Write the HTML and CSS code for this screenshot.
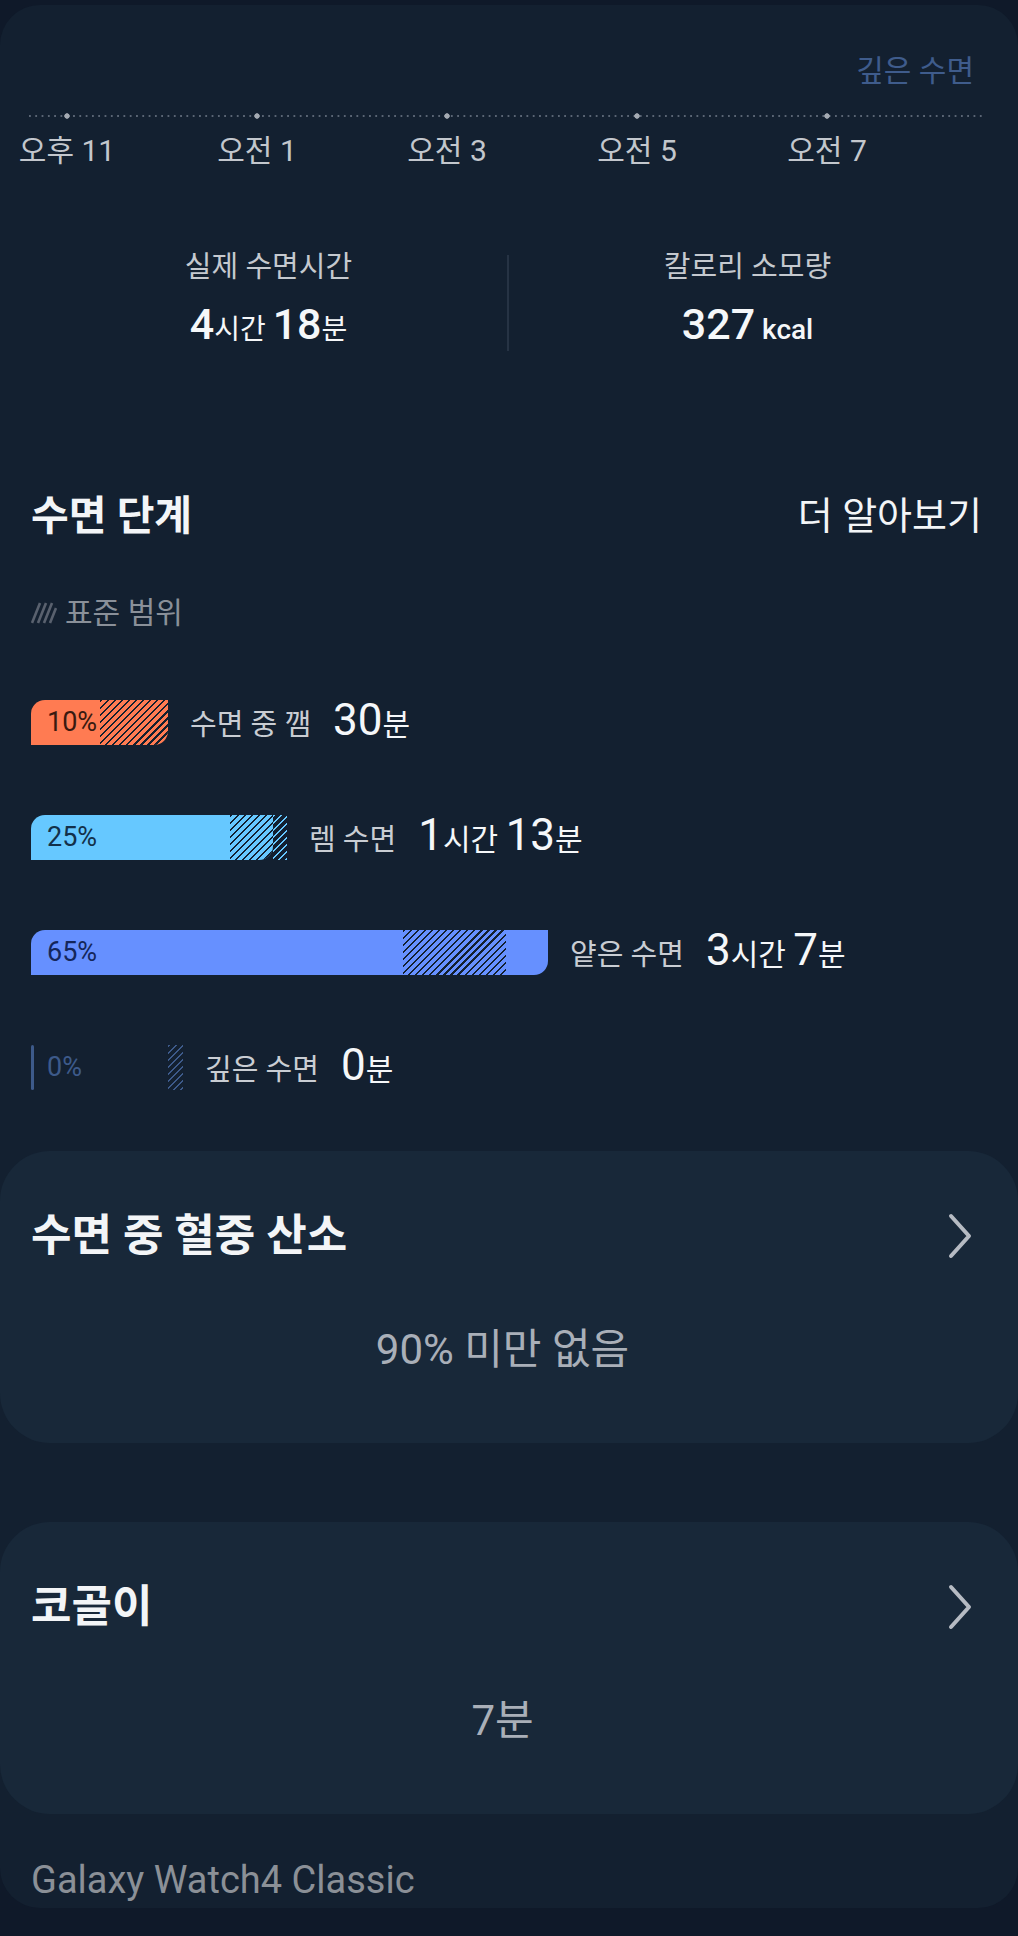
FILE: index.html
```html
<!DOCTYPE html>
<html lang="ko">
<head>
  <meta charset="UTF-8">
  <meta name="viewport" content="width=device-width, initial-scale=1.0">
  <title>수면</title>
  <link rel="stylesheet" href="styles.css">
</head>
<body>
  <div class="Screen">
    <section class="Timeline">
      <div class="StageTag">깊은 수면</div>
      <div class="AxisLine"></div>
      <div class="AxisLabels">
        <span>오후 11</span>
        <span>오전 1</span>
        <span>오전 3</span>
        <span>오전 5</span>
        <span>오전 7</span>
      </div>
    </section>

    <section class="Summary">
      <div class="SummaryItem">
        <div class="SummaryLabel">실제 수면시간</div>
        <div class="SummaryValue"><b>4</b>시간 <b>18</b>분</div>
      </div>
      <div class="SummaryDivider"></div>
      <div class="SummaryItem">
        <div class="SummaryLabel">칼로리 소모량</div>
        <div class="SummaryValue"><b>327</b> <span class="Unit">kcal</span></div>
      </div>
    </section>

    <section class="Stages">
      <div class="StagesHeader">
        <h2>수면 단계</h2>
        <a href="#" class="MoreLink">더 알아보기</a>
      </div>
      <div class="Legend">
        <svg width="26" height="24" viewBox="0 0 26 24">
          <path d="M1 22 L9 2 M7 22 L15 2 M13 22 L21 2 M19 22 L25 7" stroke="#59616e" stroke-width="2.6" fill="none"/>
        </svg>
        <span>표준 범위</span>
      </div>

      <div class="StageRow stage-awake">
        <div class="BarTrack" style="width:137px">
          <div class="BarFill" style="width:137px">
            <div class="Hatch" style="left:69px; width:68px"></div>
          </div>
          <span class="BarPct">10%</span>
        </div>
        <div class="StageText">
          <span class="StageName">수면 중 깸</span>
          <span class="StageValue"><b>30</b>분</span>
        </div>
      </div>

      <div class="StageRow stage-rem">
        <div class="BarTrack" style="width:256px">
          <div class="BarFill" style="width:242px">
            <div class="Hatch" style="left:199px; width:43px"></div>
          </div>
          <div class="HatchOut" style="left:242px; width:14px"></div>
          <span class="BarPct">25%</span>
        </div>
        <div class="StageText">
          <span class="StageName">렘 수면</span>
          <span class="StageValue"><b>1</b>시간 <b>13</b>분</span>
        </div>
      </div>

      <div class="StageRow stage-light">
        <div class="BarTrack" style="width:517px">
          <div class="BarFill" style="width:517px">
            <div class="Hatch" style="left:372px; width:103px"></div>
          </div>
          <span class="BarPct">65%</span>
        </div>
        <div class="StageText">
          <span class="StageName">얕은 수면</span>
          <span class="StageValue"><b>3</b>시간 <b>7</b>분</span>
        </div>
      </div>

      <div class="StageRow stage-deep">
        <div class="BarTrack" style="width:152px">
          <div class="BarFill" style="width:3px"></div>
          <div class="HatchOut" style="left:137px; width:15px"></div>
          <span class="BarPct">0%</span>
        </div>
        <div class="StageText">
          <span class="StageName">깊은 수면</span>
          <span class="StageValue"><b>0</b>분</span>
        </div>
      </div>
    </section>

    <section class="InfoCard">
      <div class="CardHeader">
        <h3>수면 중 혈중 산소</h3>
        <svg class="Chevron" width="30" height="48" viewBox="0 0 30 48">
          <polyline points="7,4 25,24 7,44" fill="none" stroke="#b6bbc3" stroke-width="4" stroke-linecap="round" stroke-linejoin="round"/>
        </svg>
      </div>
      <div class="CardValue">90% 미만 없음</div>
    </section>

    <section class="InfoCard">
      <div class="CardHeader">
        <h3>코골이</h3>
        <svg class="Chevron" width="30" height="48" viewBox="0 0 30 48">
          <polyline points="7,4 25,24 7,44" fill="none" stroke="#b6bbc3" stroke-width="4" stroke-linecap="round" stroke-linejoin="round"/>
        </svg>
      </div>
      <div class="CardValue">7분</div>
    </section>

    <div class="Device">Galaxy Watch4 Classic</div>
  </div>
</body>
</html>
```

FILE: styles.css
```css
* {
  margin: 0;
  padding: 0;
  box-sizing: border-box;
}

body {
  background: #0f1929;
  font-family: Roboto, "Noto Sans CJK KR", sans-serif;
  color: #f3f5f7;
}

.Screen {
  margin-top: 5px;
  background: #132030;
  border-radius: 40px;
  padding: 48px 0 5px;
  overflow: hidden;
}

/* Timeline */
.StageTag {
  text-align: right;
  padding-right: 44px;
  font-size: 30px;
  line-height: 36px;
  color: #3f5c8c;
}

.AxisLine {
  margin: 24px 34px 0 29px;
  height: 6px;
  background:
    radial-gradient(circle at center, #a4aab2 0 2.4px, transparent 3px) -57px 50% / 190px 6px repeat-x,
    linear-gradient(to right, #5a6574 2px, transparent 2px) 0 50% / 6.3px 2px repeat-x;
}

.AxisLabels {
  display: grid;
  grid-template-columns: repeat(5, 190px);
  height: 34px;
  margin: 15px 0 0 -28px;
  font-size: 30px;
  line-height: 34px;
  color: #c3c7cd;
  text-align: center;
}

/* Summary */
.Summary {
  display: flex;
  margin-top: 82px;
  padding: 0 32px 0 30px;
}

.SummaryItem {
  flex: 1;
  text-align: center;
}

.SummaryLabel {
  height: 34px;
  font-size: 29px;
  line-height: 34px;
  color: #c5c9cf;
}

.SummaryValue {
  height: 48px;
  margin-top: 19px;
  font-size: 28px;
  line-height: 48px;
  color: #f5f7f9;
}

.SummaryValue b {
  font-size: 43px;
  font-weight: 500;
  line-height: 1;
}

.SummaryValue .Unit {
  font-weight: 500;
}

.SummaryDivider {
  width: 2px;
  margin-top: 5px;
  background: #263344;
}

/* Sleep stages */
.Stages {
  margin-top: 142px;
  padding: 0 36px 0 31px;
}

.StagesHeader {
  display: flex;
  justify-content: space-between;
  align-items: center;
  height: 46px;
}

.StagesHeader h2 {
  font-size: 41px;
  line-height: 46px;
  font-weight: 700;
}

.MoreLink {
  font-size: 38px;
  line-height: 46px;
  color: #f3f5f7;
  text-decoration: none;
}

.Legend {
  display: flex;
  align-items: center;
  gap: 8px;
  height: 34px;
  margin-top: 57px;
  font-size: 30px;
  line-height: 34px;
  color: #8a9099;
}

.StageRow {
  display: flex;
  align-items: center;
  height: 45px;
  margin-top: 70px;
}

.stage-awake { --bar: #ff7b52; --pct: #3a1a10; }
.stage-rem   { --bar: #66c8ff; --pct: #13304a; }
.stage-light { --bar: #6690ff; --pct: #14265a; }
.stage-deep  { --bar: #3d5a8a; --pct: #3d5a8a; }

.BarTrack {
  position: relative;
  height: 45px;
  flex-shrink: 0;
}

.BarFill {
  position: relative;
  height: 100%;
  background: var(--bar);
  border-radius: 14px 0 14px 0;
  overflow: hidden;
}

.stage-deep .BarFill {
  border-radius: 2px;
}

.Hatch,
.HatchOut {
  position: absolute;
  top: 0;
  bottom: 0;
}

.Hatch {
  background: repeating-linear-gradient(135deg, #13202f 0 1.6px, transparent 1.6px 5px);
}

.HatchOut {
  background: repeating-linear-gradient(135deg, var(--bar) 0 1.6px, transparent 1.6px 5px);
}

.BarPct {
  position: absolute;
  left: 16px;
  top: 0;
  line-height: 45px;
  font-size: 27px;
  color: var(--pct);
}

.StageText {
  display: flex;
  align-items: baseline;
  margin-left: 22px;
  line-height: 45px;
}

.StageName {
  font-size: 29px;
  color: #c9cdd3;
}

.StageValue {
  margin-left: 22px;
  font-size: 30px;
  color: #f5f7f9;
}

.StageValue b {
  font-size: 44px;
  font-weight: 400;
  line-height: 1;
}

/* Info cards */
.InfoCard {
  margin-top: 61px;
  background: #182839;
  border-radius: 50px;
  padding: 60px 44px 70px 31px;
}

.InfoCard + .InfoCard {
  margin-top: 79px;
}

.CardHeader {
  display: flex;
  justify-content: space-between;
  align-items: center;
  height: 50px;
}

.CardHeader h3 {
  font-size: 44px;
  line-height: 50px;
  font-weight: 700;
}

.CardValue {
  height: 46px;
  margin-top: 66px;
  text-align: center;
  font-size: 42px;
  line-height: 46px;
  color: #a9afb8;
}

.Device {
  margin-top: 43px;
  padding-left: 31px;
  font-size: 38px;
  line-height: 46px;
  color: #8b9097;
}
```
